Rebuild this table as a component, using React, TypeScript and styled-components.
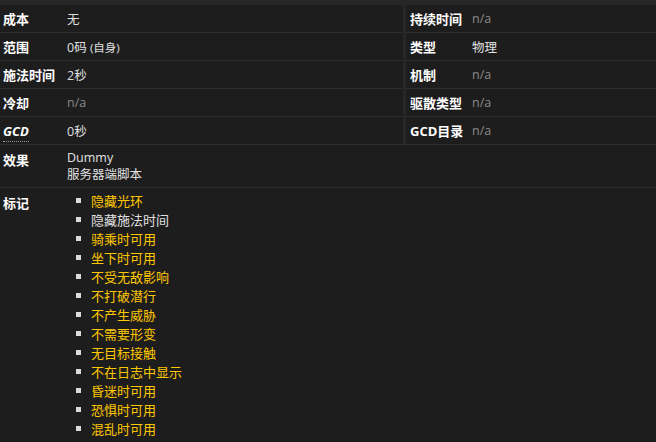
import * as React from "react";
import styled, { createGlobalStyle } from "styled-components";

const GlobalStyle = createGlobalStyle`
  html, body {
    margin: 0;
    padding: 0;
    background: #1d1d1d;
  }
  body {
    font-family: "Open Sans", "Noto Sans CJK SC", sans-serif;
    color: #dcdcdc;
  }
`;

const Wrapper = styled.div`
  width: 656px;
  height: 442px;
  overflow: hidden;
  background: #1d1d1d;
  border-top: 5px solid #272727;
  box-sizing: border-box;
`;

const TopGrid = styled.div`
  display: flex;
  border-bottom: 1px solid #2e2e2e;
`;

const Half = styled.div<{ $right?: boolean }>`
  display: flex;
  flex-direction: column;
  width: ${(p) => (p.$right ? "250px" : "403px")};
  border-right: ${(p) => (p.$right ? "none" : "3px solid #272727")};
`;

const Row = styled.div<{ $last?: boolean }>`
  display: flex;
  align-items: center;
  height: 27px;
  border-bottom: ${(p) => (p.$last ? "none" : "1px solid #2e2e2e")};
`;

const Label = styled.div<{ $width: number; $pad: number }>`
  width: ${(p) => p.$width}px;
  padding-left: ${(p) => p.$pad}px;
  box-sizing: border-box;
  flex-shrink: 0;
  font-size: 13px;
  font-weight: 700;
  color: #ffffff;
  white-space: nowrap;
`;

const GcdAbbr = styled.span`
  font-style: italic;
  border-bottom: 1px dotted #9a9a9a;
  padding-bottom: 1px;
`;

const Value = styled.div<{ $muted?: boolean }>`
  font-size: 12.5px;
  color: ${(p) => (p.$muted ? "#8a8a8a" : "#e0e0e0")};
  white-space: nowrap;
`;

const Small = styled.span`
  font-size: 11.5px;
`;

const BlockRow = styled.div<{ $border?: boolean }>`
  display: flex;
  align-items: flex-start;
  border-bottom: ${(p) => (p.$border ? "1px solid #2e2e2e" : "none")};
`;

const EffectLabel = styled(Label)`
  padding-top: 5px;
`;

const EffectBody = styled.div`
  padding: 4px 0;
  font-size: 12.5px;
  line-height: 17px;
  color: #e0e0e0;
`;

const FlagList = styled.ul`
  list-style: none;
  margin: 0;
  padding: 3px 0 0 9px;
`;

const Flag = styled.li<{ $white?: boolean }>`
  display: flex;
  align-items: center;
  height: 19px;
  font-size: 13px;
  color: ${(p) => (p.$white ? "#e0e0e0" : "#ffc800")};

  &::before {
    content: "";
    width: 5px;
    height: 5px;
    background: #dcdcdc;
    margin-right: 10px;
  }
`;

const FlagLabel = styled(Label)`
  padding-top: 5px;
`;

const leftRows: [React.ReactNode, React.ReactNode, boolean][] = [
  ["成本", "无", false],
  ["范围", <>0码 <Small>(自身)</Small></>, false],
  ["施法时间", "2秒", false],
  ["冷却", "n/a", true],
  [<GcdAbbr>GCD</GcdAbbr>, "0秒", false],
];

const rightRows: [string, string, boolean][] = [
  ["持续时间", "n/a", true],
  ["类型", "物理", false],
  ["机制", "n/a", true],
  ["驱散类型", "n/a", true],
  ["GCD目录", "n/a", true],
];

const flags: [string, boolean][] = [
  ["隐藏光环", false],
  ["隐藏施法时间", true],
  ["骑乘时可用", false],
  ["坐下时可用", false],
  ["不受无敌影响", false],
  ["不打破潜行", false],
  ["不产生威胁", false],
  ["不需要形变", false],
  ["无目标接触", false],
  ["不在日志中显示", false],
  ["昏迷时可用", false],
  ["恐惧时可用", false],
  ["混乱时可用", false],
];

const App = () => {
  return (
    <Wrapper>
      <GlobalStyle />
      <TopGrid>
        <Half>
          {leftRows.map(([label, value, muted], i) => (
            <Row key={i} $last={i === leftRows.length - 1}>
              <Label $width={67} $pad={3}>{label}</Label>
              <Value $muted={muted}>{value}</Value>
            </Row>
          ))}
        </Half>
        <Half $right>
          {rightRows.map(([label, value, muted], i) => (
            <Row key={label} $last={i === rightRows.length - 1}>
              <Label $width={66} $pad={4}>{label}</Label>
              <Value $muted={muted}>{value}</Value>
            </Row>
          ))}
        </Half>
      </TopGrid>
      <BlockRow $border>
        <EffectLabel $width={67} $pad={3}>效果</EffectLabel>
        <EffectBody>
          <div>Dummy</div>
          <div>服务器端脚本</div>
        </EffectBody>
      </BlockRow>
      <BlockRow>
        <FlagLabel $width={67} $pad={3}>标记</FlagLabel>
        <FlagList>
          {flags.map(([name, white]) => (
            <Flag key={name} $white={white}>{name}</Flag>
          ))}
        </FlagList>
      </BlockRow>
    </Wrapper>
  );
};

export default App;
